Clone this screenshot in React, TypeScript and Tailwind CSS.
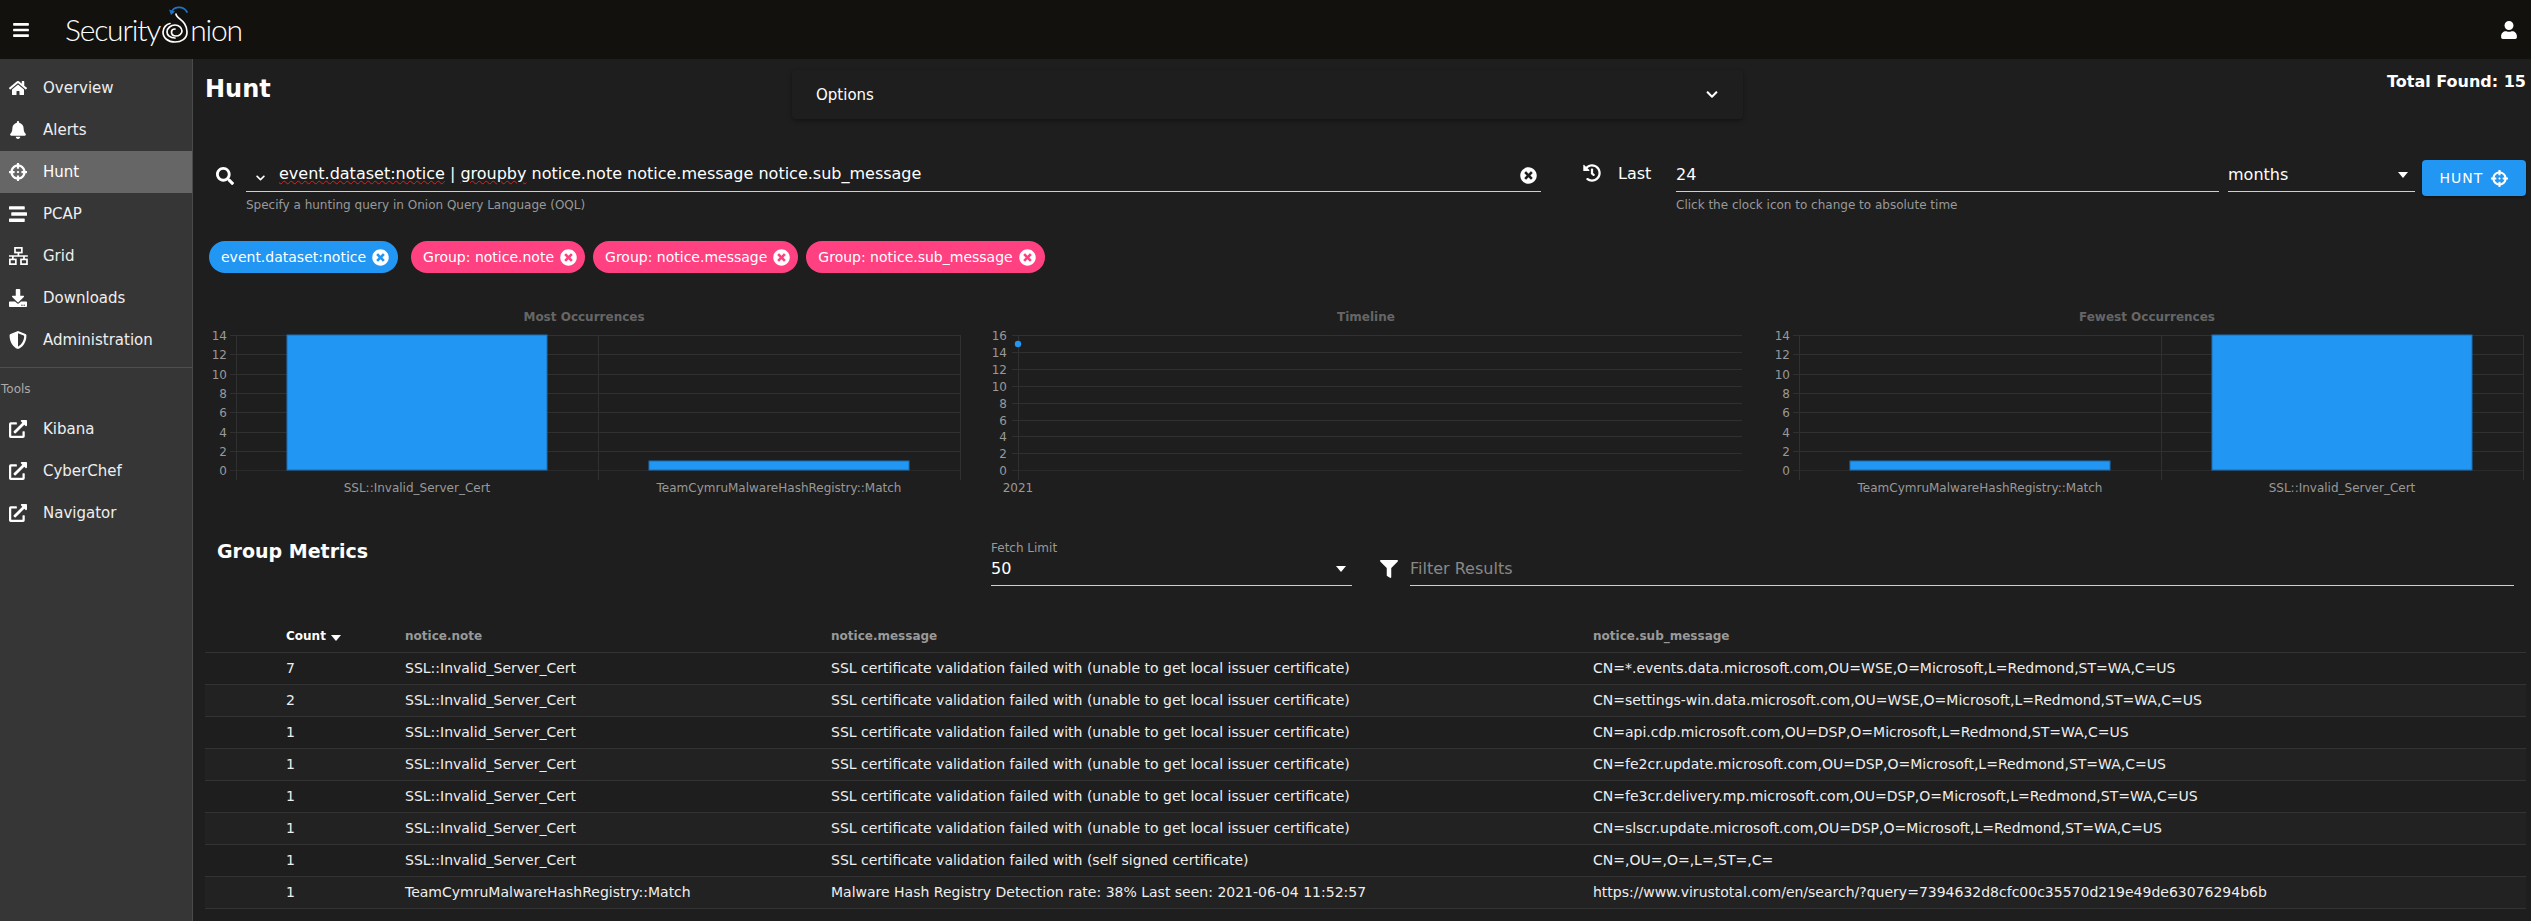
import React from 'react';
import {
  FaBars,
  FaBell,
  FaChevronDown,
  FaCrosshairs,
  FaDownload,
  FaExternalLinkAlt,
  FaFilter,
  FaHistory,
  FaHome,
  FaSearch,
  FaShieldAlt,
  FaStream,
  FaTimesCircle,
  FaUser,
} from 'react-icons/fa';

const GridIcon: React.FC<{ className?: string }> = ({ className }) => (
  <svg viewBox="0 0 22 21" fill="none" stroke="white" strokeWidth="2" className={className}>
    <rect x="7" y="1" width="8" height="5.5" />
    <path d="M11 7v3M0 10.5h22M4.5 10.5v4M17.5 10.5v4" />
    <rect x="1" y="14.5" width="7" height="5.5" />
    <rect x="14" y="14.5" width="7" height="5.5" />
  </svg>
);

const navItems = [
  { label: 'Overview', icon: FaHome },
  { label: 'Alerts', icon: FaBell },
  { label: 'Hunt', icon: FaCrosshairs, active: true },
  { label: 'PCAP', icon: FaStream },
  { label: 'Grid', icon: GridIcon },
  { label: 'Downloads', icon: FaDownload },
  { label: 'Administration', icon: FaShieldAlt },
];

const tools = ['Kibana', 'CyberChef', 'Navigator'];

const chips = [
  { label: 'event.dataset:notice', color: 'bg-[#2196f3] mr-[5px] pr-[9px]' },
  { label: 'Group: notice.note', color: 'bg-[#ff4081] pr-[8px]' },
  { label: 'Group: notice.message', color: 'bg-[#ff4081] pr-[8px]' },
  { label: 'Group: notice.sub_message', color: 'bg-[#ff4081] pr-[9px]' },
];

const failed = 'SSL certificate validation failed with (unable to get local issuer certificate)';

const rows = [
  ['7', 'SSL::Invalid_Server_Cert', failed, 'CN=*.events.data.microsoft.com,OU=WSE,O=Microsoft,L=Redmond,ST=WA,C=US'],
  ['2', 'SSL::Invalid_Server_Cert', failed, 'CN=settings-win.data.microsoft.com,OU=WSE,O=Microsoft,L=Redmond,ST=WA,C=US'],
  ['1', 'SSL::Invalid_Server_Cert', failed, 'CN=api.cdp.microsoft.com,OU=DSP,O=Microsoft,L=Redmond,ST=WA,C=US'],
  ['1', 'SSL::Invalid_Server_Cert', failed, 'CN=fe2cr.update.microsoft.com,OU=DSP,O=Microsoft,L=Redmond,ST=WA,C=US'],
  ['1', 'SSL::Invalid_Server_Cert', failed, 'CN=fe3cr.delivery.mp.microsoft.com,OU=DSP,O=Microsoft,L=Redmond,ST=WA,C=US'],
  ['1', 'SSL::Invalid_Server_Cert', failed, 'CN=slscr.update.microsoft.com,OU=DSP,O=Microsoft,L=Redmond,ST=WA,C=US'],
  ['1', 'SSL::Invalid_Server_Cert', 'SSL certificate validation failed with (self signed certificate)', 'CN=,OU=,O=,L=,ST=,C='],
  ['1', 'TeamCymruMalwareHashRegistry::Match', 'Malware Hash Registry Detection rate: 38% Last seen: 2021-06-04 11:52:57', 'https://www.virustotal.com/en/search/?query=7394632d8cfc00c35570d219e49de63076294b6b'],
];

const Triangle = () => (
  <svg width="10" height="6" viewBox="0 0 10 6" className="fill-white">
    <path d="M0 0h10L5 6z" />
  </svg>
);

const Spiral = () => (
  <svg width="30" height="40" viewBox="0 0 30 40" fill="none" className="mt-[-9px] shrink-0">
    <path d="M11.5 7.5C13 1.5 23 0 27 7" stroke="#1f73c4" strokeWidth="1.8" strokeLinecap="round" />
    <path d="M9 4.5L11 10L15 6.5z" fill="#1f73c4" />
    <path
      d="M16 9C16 14 27 15 27 27C27 34 21 37 15 37C8 37 3 33 3 27C3 22 7 19 10 18.5M15 33C10 33 7 30 7 27C7 23 11 20 15 20C19 20 22 23 22 26C22 29 19 31 16 31C13 31 11.5 29 11.5 27C11.5 25 13 24 15 24"
      stroke="white"
      strokeWidth="1.7"
      strokeLinecap="round"
    />
  </svg>
);

interface BarChartProps {
  title: string;
  titleX: number;
  axisX: number;
  bars: { x: number; top: number; label: string; labelX: number }[];
  midX: number;
}

const gridYs14 = [335, 354, 374, 393, 412, 432, 451];

const BarChart: React.FC<BarChartProps> = ({ title, titleX, axisX, bars, midX }) => {
  const right = axisX + 724;
  return (
    <svg width="773" height="200" viewBox="0 0 773 200" className="shrink-0 block">
      <text x={titleX} y="16" textAnchor="middle" fontSize="12" fontWeight="700" fill="#666">
        {title}
      </text>
      {gridYs14.map((y) => (
        <line key={y} x1={axisX - 6} x2={right} y1={y - 305 + 0.5} y2={y - 305 + 0.5} stroke="#303030" />
      ))}
      <line x1={axisX - 6} x2={right} y1="165.5" y2="165.5" stroke="#2a2a2a" />
      <line x1={axisX + 0.5} x2={axisX + 0.5} y1="30" y2="175" stroke="#303030" />
      <line x1={midX + 0.5} x2={midX + 0.5} y1="30" y2="175" stroke="#303030" />
      <line x1={right + 0.5} x2={right + 0.5} y1="30" y2="175" stroke="#303030" />
      {['14', '12', '10', '8', '6', '4', '2'].map((t, i) => (
        <text key={t} x={axisX - 9} y={gridYs14[i] - 305 + 4.5} textAnchor="end" fontSize="12" fill="#999">
          {t}
        </text>
      ))}
      <text x={axisX - 9} y="169.5" textAnchor="end" fontSize="12" fill="#999">
        0
      </text>
      {bars.map((b) => (
        <g key={b.label}>
          <rect x={b.x} y={b.top} width="260" height={165 - b.top} fill="#2196f3" stroke="#1b6fb5" />
          <text x={b.labelX} y="186.5" textAnchor="middle" fontSize="12" fill="#999">
            {b.label}
          </text>
        </g>
      ))}
    </svg>
  );
};

const Timeline = () => {
  const ys = [30, 47, 64, 81, 98, 115, 131, 148];
  const labels = ['16', '14', '12', '10', '8', '6', '4', '2'];
  return (
    <svg width="773" height="200" viewBox="0 0 773 200" className="shrink-0 block">
      <text x="387" y="16" textAnchor="middle" fontSize="12" fontWeight="700" fill="#666">
        Timeline
      </text>
      {ys.map((y, i) => (
        <g key={y}>
          <line x1="33" x2="763" y1={y + 0.5} y2={y + 0.5} stroke="#303030" />
          <text x="28" y={y + 4.5} textAnchor="end" fontSize="12" fill="#999">
            {labels[i]}
          </text>
        </g>
      ))}
      <line x1="33" x2="763" y1="165.5" y2="165.5" stroke="#2a2a2a" />
      <text x="28" y="169.5" textAnchor="end" fontSize="12" fill="#999">
        0
      </text>
      <line x1="39.5" x2="39.5" y1="30" y2="175" stroke="#303030" />
      <circle cx="39" cy="39" r="3.2" fill="#2196f3" />
      <text x="39" y="186.5" textAnchor="middle" fontSize="12" fill="#999">
        2021
      </text>
    </svg>
  );
};

export default function App() {
  return (
    <div className="flex h-[921px] w-[2531px] flex-col overflow-hidden bg-[#1e1e1e] font-['DejaVu_Sans',sans-serif] text-white">
      <header className="flex h-[59px] shrink-0 items-center justify-between bg-[#12110d] pl-[13px] pr-[13px]">
        <div className="flex items-center">
          <FaBars className="h-[18px] w-[16px]" />
          <div className="ml-[36px] flex items-center font-['Lato',sans-serif] text-[30px] font-light tracking-[-1.2px]">
            <span>Security</span>
            <Spiral />
            <span>nion</span>
          </div>
        </div>
        <FaUser className="h-[18px] w-[18px]" />
      </header>

      <div className="flex min-h-0 flex-1">
        <nav className="w-[193px] shrink-0 border-r border-[#4a4a4a] bg-[#363636] pt-[8px] text-[#eee]">
          {navItems.map((item) => (
            <div
              key={item.label}
              className={`flex h-[42px] items-center pl-[9px] text-[15px] ${item.active ? 'bg-[#666666] text-white' : ''}`}
            >
              <span className="flex w-[34px] shrink-0 items-center">
                <item.icon className="h-[18px] w-auto text-white" />
              </span>
              {item.label}
            </div>
          ))}
          <div className="mt-[6px] border-t border-[#4f4f4f]" />
          <div className="pl-[1px] pt-[14px] text-[12px] leading-[14px] text-[#aaa]">Tools</div>
          <div className="mt-[12px]">
            {tools.map((t) => (
              <div key={t} className="flex h-[42px] items-center pl-[9px] text-[15px]">
                <span className="flex w-[34px] shrink-0 items-center">
                  <FaExternalLinkAlt className="h-[18px] w-[18px] text-white" />
                </span>
                {t}
              </div>
            ))}
          </div>
        </nav>

        <main className="min-w-0 flex-1 pl-[13px] pr-[5px]">
          <div className="flex h-[101px] items-start">
            <h1 className="ml-[-1px] mt-[12px] w-[587px] shrink-0 text-[24px] leading-[36px] font-bold">Hunt</h1>
            <div className="mt-[11px] flex h-[49px] w-[951px] shrink-0 items-center justify-between rounded-[4px] bg-[#1e1e1e] pl-[24px] pr-[23px] text-[15px] shadow-[0_2px_4px_rgba(0,0,0,0.35)]">
              <span className="pt-[2px]">Options</span>
              <FaChevronDown className="h-[13px] w-[16px]" />
            </div>
            <div className="mt-[13px] flex-1 text-right text-[16px] leading-[20px] font-bold">Total Found: 15</div>
          </div>

          <div className="flex h-[71px] items-start">
            <FaSearch className="ml-[10px] mt-[7px] h-[18px] w-[18px] shrink-0" />
            <div className="ml-[12px] flex w-[1295px] shrink-0 flex-col">
              <div className="flex h-[32px] items-center border-b border-[#cfcfcf] pb-[3px] text-[16px]">
                <FaChevronDown className="ml-[8px] mt-[8px] h-[10px] w-[13px]" />
                <span className="ml-[12px]">
                  <span className="underline decoration-[#e02020] decoration-wavy decoration-[1px]">event.dataset:notice</span>
                  {' | '}
                  <span className="underline decoration-[#e02020] decoration-wavy decoration-[1px]">groupby</span>
                  {' notice.note notice.message notice.sub_message'}
                </span>
                <FaTimesCircle className="ml-auto mr-[4px] mt-[2px] h-[17px] w-[17px]" />
              </div>
              <div className="mt-[5px] text-[12px] leading-[16px] text-[#999]">
                Specify a hunting query in Onion Query Language (OQL)
              </div>
            </div>
            <FaHistory className="ml-[42px] mt-[4px] h-[18px] w-[18px] shrink-0" />
            <span className="ml-[17px] mt-[4px] w-[58px] shrink-0 text-[16px] leading-[20px]">Last</span>
            <div className="flex w-[543px] shrink-0 flex-col">
              <div className="flex h-[32px] items-center border-b border-[#cfcfcf] pb-[1px] text-[16px]">24</div>
              <div className="mt-[5px] text-[12px] leading-[16px] text-[#999]">Click the clock icon to change to absolute time</div>
            </div>
            <div className="ml-[9px] flex h-[32px] w-[187px] shrink-0 items-center justify-between border-b border-[#cfcfcf] pb-[1px] pr-[7px] text-[16px]">
              months
              <Triangle />
            </div>
            <button className="ml-[7px] flex h-[36px] w-[104px] shrink-0 items-center justify-center gap-[8px] rounded-[4px] bg-[#2196f3] text-[14px] tracking-[1px] shadow-[0_2px_2px_rgba(0,0,0,0.3)]">
              HUNT
              <FaCrosshairs className="h-[17px] w-[17px]" />
            </button>
          </div>

          <div className="ml-[3px] flex h-[74px] items-start gap-[8px] pt-[10px]">
            {chips.map((c) => (
              <div key={c.label} className={`flex h-[32px] items-center gap-[6px] rounded-full pl-[12px] text-[14px] ${c.color}`}>
                {c.label}
                <FaTimesCircle className="h-[17px] w-[17px]" />
              </div>
            ))}
          </div>

          <div className="flex h-[200px]">
            <BarChart
              title="Most Occurrences"
              titleX={378}
              axisX={30}
              midX={392}
              bars={[
                { x: 81, top: 30, label: 'SSL::Invalid_Server_Cert', labelX: 211 },
                { x: 443, top: 156, label: 'TeamCymruMalwareHashRegistry::Match', labelX: 573 },
              ]}
            />
            <Timeline />
            <BarChart
              title="Fewest Occurrences"
              titleX={395}
              axisX={47}
              midX={409}
              bars={[
                { x: 98, top: 156, label: 'TeamCymruMalwareHashRegistry::Match', labelX: 228 },
                { x: 460, top: 30, label: 'SSL::Invalid_Server_Cert', labelX: 590 },
              ]}
            />
          </div>

          <div className="flex h-[115px] items-start pt-[31px]">
            <h2 className="ml-[11px] w-[774px] shrink-0 text-[19px] leading-[30px] font-bold">Group Metrics</h2>
            <div className="mt-[5px] flex w-[361px] shrink-0 flex-col border-b border-[#cfcfcf]">
              <span className="text-[12px] leading-[14px] text-[#999]">Fetch Limit</span>
              <div className="flex h-[30px] items-center justify-between pb-[3px] pr-[6px] text-[16px]">
                50
                <Triangle />
              </div>
            </div>
            <FaFilter className="ml-[28px] mt-[24px] h-[18px] w-[18px] shrink-0" />
            <div className="ml-[12px] mt-[20px] flex h-[30px] w-[1104px] shrink-0 items-center border-b border-[#cfcfcf] pb-[3px] text-[16px] text-[#888]">
              Filter Results
            </div>
          </div>

          <table className="ml-[-1px] w-[2321px] table-fixed border-collapse text-[14px]">
            <colgroup>
              <col className="w-[200px]" />
              <col className="w-[426px]" />
              <col className="w-[762px]" />
              <col />
            </colgroup>
            <thead>
              <tr className="h-[32px] border-b border-[#333] text-left text-[12px] font-bold text-[#999]">
                <th className="pl-[81px] font-bold text-white">
                  <span className="inline-flex items-center gap-[5px]">
                    Count
                    <span className="mt-[4px]">
                      <Triangle />
                    </span>
                  </span>
                </th>
                <th className="font-bold">notice.note</th>
                <th className="font-bold">notice.message</th>
                <th className="font-bold">notice.sub_message</th>
              </tr>
            </thead>
            <tbody>
              {rows.map((r, i) => (
                <tr key={i} className={`h-[32px] border-b border-[#333] text-[#eee] ${i % 2 === 1 ? 'bg-[#222222]' : ''}`}>
                  <td className="pl-[81px]">{r[0]}</td>
                  <td>{r[1]}</td>
                  <td>{r[2]}</td>
                  <td>{r[3]}</td>
                </tr>
              ))}
            </tbody>
          </table>
        </main>
      </div>
    </div>
  );
}
